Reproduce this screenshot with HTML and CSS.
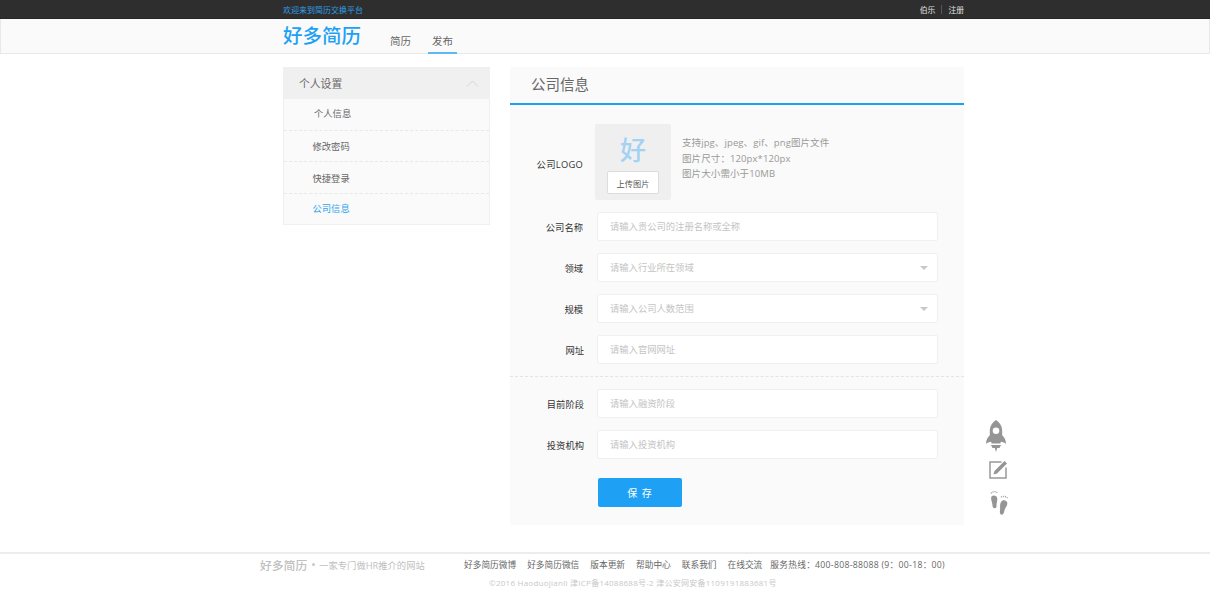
FILE: index.html
```html
<!DOCTYPE html>
<html lang="zh-CN">
<head>
<meta charset="utf-8">
<title>好多简历</title>
<link rel="stylesheet" href="styles.css">
</head>
<body>
<div class="topbar">
  <div class="wrap topbar-in">
    <span class="welcome">欢迎来到简历交换平台</span>
    <span class="top-links"><a>伯乐</a><i class="sep"></i><a>注册</a></span>
  </div>
</div>
<header class="nav">
  <div class="wrap nav-in">
    <span class="logo">好多简历</span>
    <a class="nav-item">简历</a>
    <a class="nav-item active">发布</a>
  </div>
</header>
<main class="wrap content">
  <aside class="side">
    <div class="side-head">
      <span>个人设置</span>
      <svg class="chev" width="13" height="7" viewBox="0 0 13 7"><path d="M1 6.500 6.500 1 12 6.500" fill="none" stroke="#d4d4d4" stroke-width="1"/></svg>
    </div>
    <a class="side-item first">个人信息</a>
    <a class="side-item">修改密码</a>
    <a class="side-item third">快捷登录</a>
    <a class="side-item current">公司信息</a>
  </aside>
  <section class="panel">
    <h1 class="panel-title">公司信息</h1>
    <div class="logo-row">
      <label class="lbl">公司LOGO</label>
      <div class="logo-box">
        <span class="logo-char">好</span>
        <button class="upload">上传图片</button>
      </div>
      <div class="hints">
        <p>支持jpg、jpeg、gif、png图片文件</p>
        <p>图片尺寸<span class="tc">：</span>120px*120px</p>
        <p>图片大小需小于10MB</p>
      </div>
    </div>
    <div class="row"><label class="lbl">公司名称</label><div class="field">请输入贵公司的注册名称或全称</div></div>
    <div class="row"><label class="lbl">领域</label><div class="field select">请输入行业所在领域<i class="caret"></i></div></div>
    <div class="row"><label class="lbl">规模</label><div class="field select">请输入公司人数范围<i class="caret"></i></div></div>
    <div class="row"><label class="lbl lbl-shift">网址</label><div class="field">请输入官网网址</div></div>
    <hr class="dash">
    <div class="row"><label class="lbl lbl-shift">目前阶段</label><div class="field">请输入融资阶段</div></div>
    <div class="row"><label class="lbl lbl-shift">投资机构</label><div class="field">请输入投资机构</div></div>
    <button class="save">保 存</button>
  </section>
</main>
<div class="tools">
  <svg width="20" height="32" viewBox="0 0 20 32"><path fill="#959595" fill-rule="evenodd" d="M10 0c3.500 2.500 6.200 6 6.200 11v4.500c2 1.500 3.800 4 3.800 8.500-1.500-1.300-3-2-5-2.200l-.8 1.700H5.800L5 21.800c-2 .2-3.500.9-5 2.200 0-4.500 1.800-7 3.800-8.500V11C3.800 6 6.500 2.500 10 0zm0 7.500a3.300 3.300 0 1 0 0 6.600 3.300 3.300 0 0 0 0-6.600z"/><path fill="#959595" d="M5 25h10l-1.500 3h-2.300L10 32l-1.200-4H6.500z"/></svg>
  <svg width="18" height="18" viewBox="0 0 18 18"><path d="M12.500 1H1v16h16V6.500" fill="none" stroke="#999" stroke-width="1.500"/><path fill="#959595" d="M15.500 0 18 2.500 8 12.500l-3.500 1 1-3.500z"/></svg>
  <svg width="19" height="26" viewBox="0 0 19 26"><g fill="#959595"><path d="M1.500 6.500C3.500 4.800 7 5.500 7.300 8.500c.2 2.500-1 5-.8 7 .2 1.800-.3 2.800-1.800 2.800-1.800 0-2.200-1.500-2.200-3C2.500 12.500.3 9 1.500 6.500z"/><path d="M12.500 10.500c3-.8 5.500 1.200 4.700 4-.7 2.400-2.400 4-2.900 6.500-.4 2.300-1.200 4-3 3.600-1.600-.4-1.600-2.300-1.300-4.200.4-3-.8-8.200 2.500-9.900z"/></g><path d="M1 3.500C2.500 1.200 6 1 7.800 3.200M11 7.300c1.800-1.500 5-1.300 6.800 1" fill="none" stroke="#ababab" stroke-width="1.400" stroke-dasharray="1.200 .8"/></svg>
</div>
<footer class="footer">
  <div class="foot-in">
    <div class="foot-brand"><span class="foot-logo">好多简历</span><span class="foot-dot"></span><span class="foot-slogan">一家专门做HR推介的网站</span></div>
    <div class="foot-links">
      <a>好多简历微博</a><a>好多简历微信</a><a>版本更新</a><a>帮助中心</a><a>联系我们</a><a>在线交流</a><span class="hotline">服务热线<span class="tc">：</span>400-808-88088 (9<span class="tc">：</span>00-18<span class="tc">：</span>00)</span>
    </div>
  </div>
  <p class="copy">©2016 Haoduojianli 津ICP备14088688号-2 津公安网安备1109191883681号</p>
</footer>
</body>
</html>
```
FILE: styles.css
```css
* { box-sizing: border-box; }
html, body { margin: 0; padding: 0; height: 600px; overflow: hidden; }
body {
  position: relative;
  background: #fff;
  color: #555;
  font-family: "Open Sans", "Noto Sans CJK SC", sans-serif;
  font-size: 9.300px;
}
a { color: inherit; text-decoration: none; }
.tc { font-family: "Noto Sans CJK TC", sans-serif; }
.wrap { width: 681px; margin-left: 283px; }

.topbar { height: 19px; background: #2e2e2e; border-bottom: 1px solid #262626; }
.topbar-in { display: flex; justify-content: space-between; align-items: center; height: 18px; }
.welcome { color: #2f9fe6; font-size: 8px; }
.top-links { display: flex; align-items: center; color: #e0e0e0; font-size: 7.800px; }
.sep { width: 1px; height: 9px; background: #555; margin: 0 6px; }

.nav { height: 35px; background: #fafafa; border: 1px solid #e8e8e8; border-top: 0; }
.nav-in { display: flex; height: 34px; margin-left: 282px; }
.logo { width: 103px; color: #1ea0f5; font-size: 19.500px; font-weight: 500; line-height: 34px; }
.nav-item { width: 29px; margin-right: 13px; text-align: center; color: #666; font-size: 10.500px; line-height: 45px; height: 35px; }
.nav-item.active { border-bottom: 2px solid #5fb8f0; }

.content { display: flex; gap: 20px; padding-top: 13px; align-items: flex-start; height: 498px; }

.side { width: 207px; height: 158px; background: #fafafa; border: 1px solid #f0f0f0; border-top: 0; }
.side-head { display: flex; justify-content: space-between; align-items: center; height: 32px; margin: 0 -1px; padding: 0 11px 0 16px; background: #f0f0f0; color: #666; font-size: 10.800px; }
.side-item { display: block; height: 31.500px; line-height: 32px; padding-left: 28.500px; color: #666; border-bottom: 1px dashed #e8e8e8; }
.side-item.first { padding-left: 30px; line-height: 30px; }
.side-item.third { line-height: 33px; }
.side-item.current { color: #2ea3ef; border-bottom: 0; line-height: 30px; }

.panel { width: 454px; height: 458px; background: #fafafa; border-radius: 2px; display: flex; flex-direction: column; }
.panel-title { margin: 0; height: 38px; padding-left: 21px; border-bottom: 2px solid #1ea0f5; color: #666; font-size: 14.500px; font-weight: 400; line-height: 36px; }

.logo-row { display: flex; align-items: center; margin-top: 19px; height: 76px; }
.lbl { width: 73px; flex: none; text-align: right; color: #333; font-size: 9.300px; }
.logo-row .lbl { margin: 3px 12px 0 0; letter-spacing: .3px; }
.logo-box { width: 76px; height: 76px; background: #f0efef; border-radius: 2px; display: flex; flex-direction: column; align-items: center; }
.logo-char { color: #a3d2f4; font-size: 26px; font-weight: 500; line-height: 26px; margin-top: 13px; }
.upload { width: 52px; height: 23px; margin-top: 8px; padding: 0; background: #fff; border: 1px solid #dcdcdc; border-radius: 2px; color: #555; font: inherit; font-size: 8.200px; }
.hints { margin: -7px 0 0 11px; color: #999; font-size: 9.500px; letter-spacing: .1px; line-height: 15.500px; }
.hints p { margin: 0; }

.row { display: flex; align-items: center; margin-top: 12px; height: 29px; }
.row .lbl { margin-right: 14px; }
.row .lbl-shift { width: 74px; margin-right: 13px; }
.field { position: relative; width: 341px; height: 29px; line-height: 27px; padding-left: 12px; background: #fff; border: 1px solid #f0f0f0; border-radius: 2px; color: #c4c4c4; }
.caret { position: absolute; right: 9px; top: 12px; width: 0; height: 0; border: 4px solid transparent; border-top: 4px solid #c8c8c8; border-bottom: 0; }
.dash { width: 100%; margin: 12px 0 0; border: 0; border-top: 1px dashed #e4e4e4; }
.save { width: 84px; height: 29px; margin: 19px 0 0 88px; padding: 0; background: #1ea0f5; border: 0; border-radius: 2px; color: #fff; font: inherit; font-size: 10px; letter-spacing: 1px; }

.tools { position: absolute; left: 986px; top: 420px; display: flex; flex-direction: column; align-items: flex-start; }
.tools svg:nth-child(2) { margin: 9px 0 0 3px; }
.tools svg:nth-child(3) { margin: 11px 0 0 4px; }

.footer { border-top: 2px solid #ececec; height: 47px; }
.foot-in { display: flex; align-items: center; height: 21px; padding-left: 260px; }
.foot-brand { display: flex; align-items: center; width: 204px; color: #c0c0c0; flex: none; }
.foot-logo { font-size: 11.800px; font-weight: 500; }
.foot-dot { width: 3px; height: 3px; margin: 0 4px 0 5px; border-radius: 50%; background: #c8c8c8; }
.foot-slogan { font-size: 9.300px; }
.foot-links { display: flex; gap: 11px; color: #666; font-size: 8.700px; white-space: nowrap; }
.hotline { margin-left: -3px; letter-spacing: .28px; }
.copy { margin: 0 0 0 489px; color: #c8c8c8; font-size: 8px; letter-spacing: .25px; line-height: 16px; white-space: nowrap; }
```
